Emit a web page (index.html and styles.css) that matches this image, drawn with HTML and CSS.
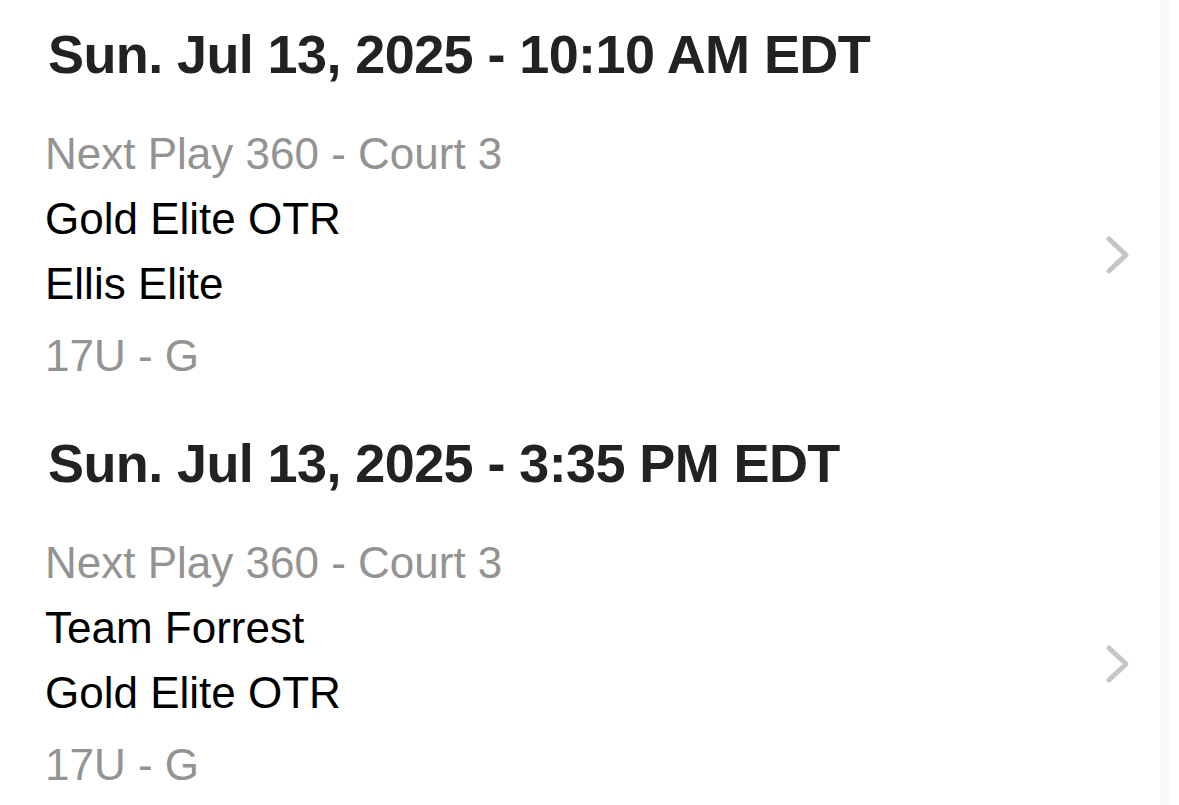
FILE: index.html
```html
<!DOCTYPE html>
<html>
<head>
<meta charset="utf-8">
<link rel="stylesheet" href="styles.css">
</head>
<body>
<div class="page">
  <main class="list">
    <section class="game">
      <h2 class="game-time">Sun. Jul 13, 2025 - 10:10 AM EDT</h2>
      <div class="cell">
        <div class="lines">
          <div class="line muted">Next Play 360 - Court 3</div>
          <div class="line">Gold Elite OTR</div>
          <div class="line">Ellis Elite</div>
          <div class="line muted division">17U - G</div>
        </div>
        <svg class="chevron" width="26" height="40" viewBox="0 0 26 40"><polyline points="4,4 21,20 4,36" fill="none" stroke="#c6c6c8" stroke-width="5" stroke-linecap="round" stroke-linejoin="round"/></svg>
      </div>
    </section>
    <section class="game">
      <h2 class="game-time">Sun. Jul 13, 2025 - 3:35 PM EDT</h2>
      <div class="cell">
        <div class="lines">
          <div class="line muted">Next Play 360 - Court 3</div>
          <div class="line">Team Forrest</div>
          <div class="line">Gold Elite OTR</div>
          <div class="line muted division">17U - G</div>
        </div>
        <svg class="chevron" width="26" height="40" viewBox="0 0 26 40"><polyline points="4,4 21,20 4,36" fill="none" stroke="#c6c6c8" stroke-width="5" stroke-linecap="round" stroke-linejoin="round"/></svg>
      </div>
    </section>
  </main>
  <div class="scroll-track"></div>
  <div class="edge"></div>
</div>
</body>
</html>
```
FILE: styles.css
```css
html, body {
  margin: 0;
  padding: 0;
  background: #ffffff;
  font-family: "Liberation Sans", Arial, sans-serif;
}

.page {
  display: flex;
  min-height: 805px;
}

.list {
  flex: 1;
  padding-top: 22px;
}

.game {
  display: flex;
  flex-direction: column;
}

.game-time {
  margin: 0 0 35px 48px;
  font-size: 54px;
  line-height: 64px;
  font-weight: 700;
  letter-spacing: -0.6px;
  color: #222222;
}

.cell {
  display: flex;
  align-items: center;
  justify-content: space-between;
  padding: 0 29px 0 45px;
  margin-bottom: 43px;
}

.lines {
  display: flex;
  flex-direction: column;
}

.line {
  font-size: 44px;
  line-height: 65px;
  color: #000000;
}

.line.muted {
  color: #939393;
}

.line.division {
  margin-top: 7px;
}

.chevron {
  display: block;
}

.scroll-track {
  width: 9px;
  background: #f8f8f8;
}

.edge {
  width: 10px;
}
```
